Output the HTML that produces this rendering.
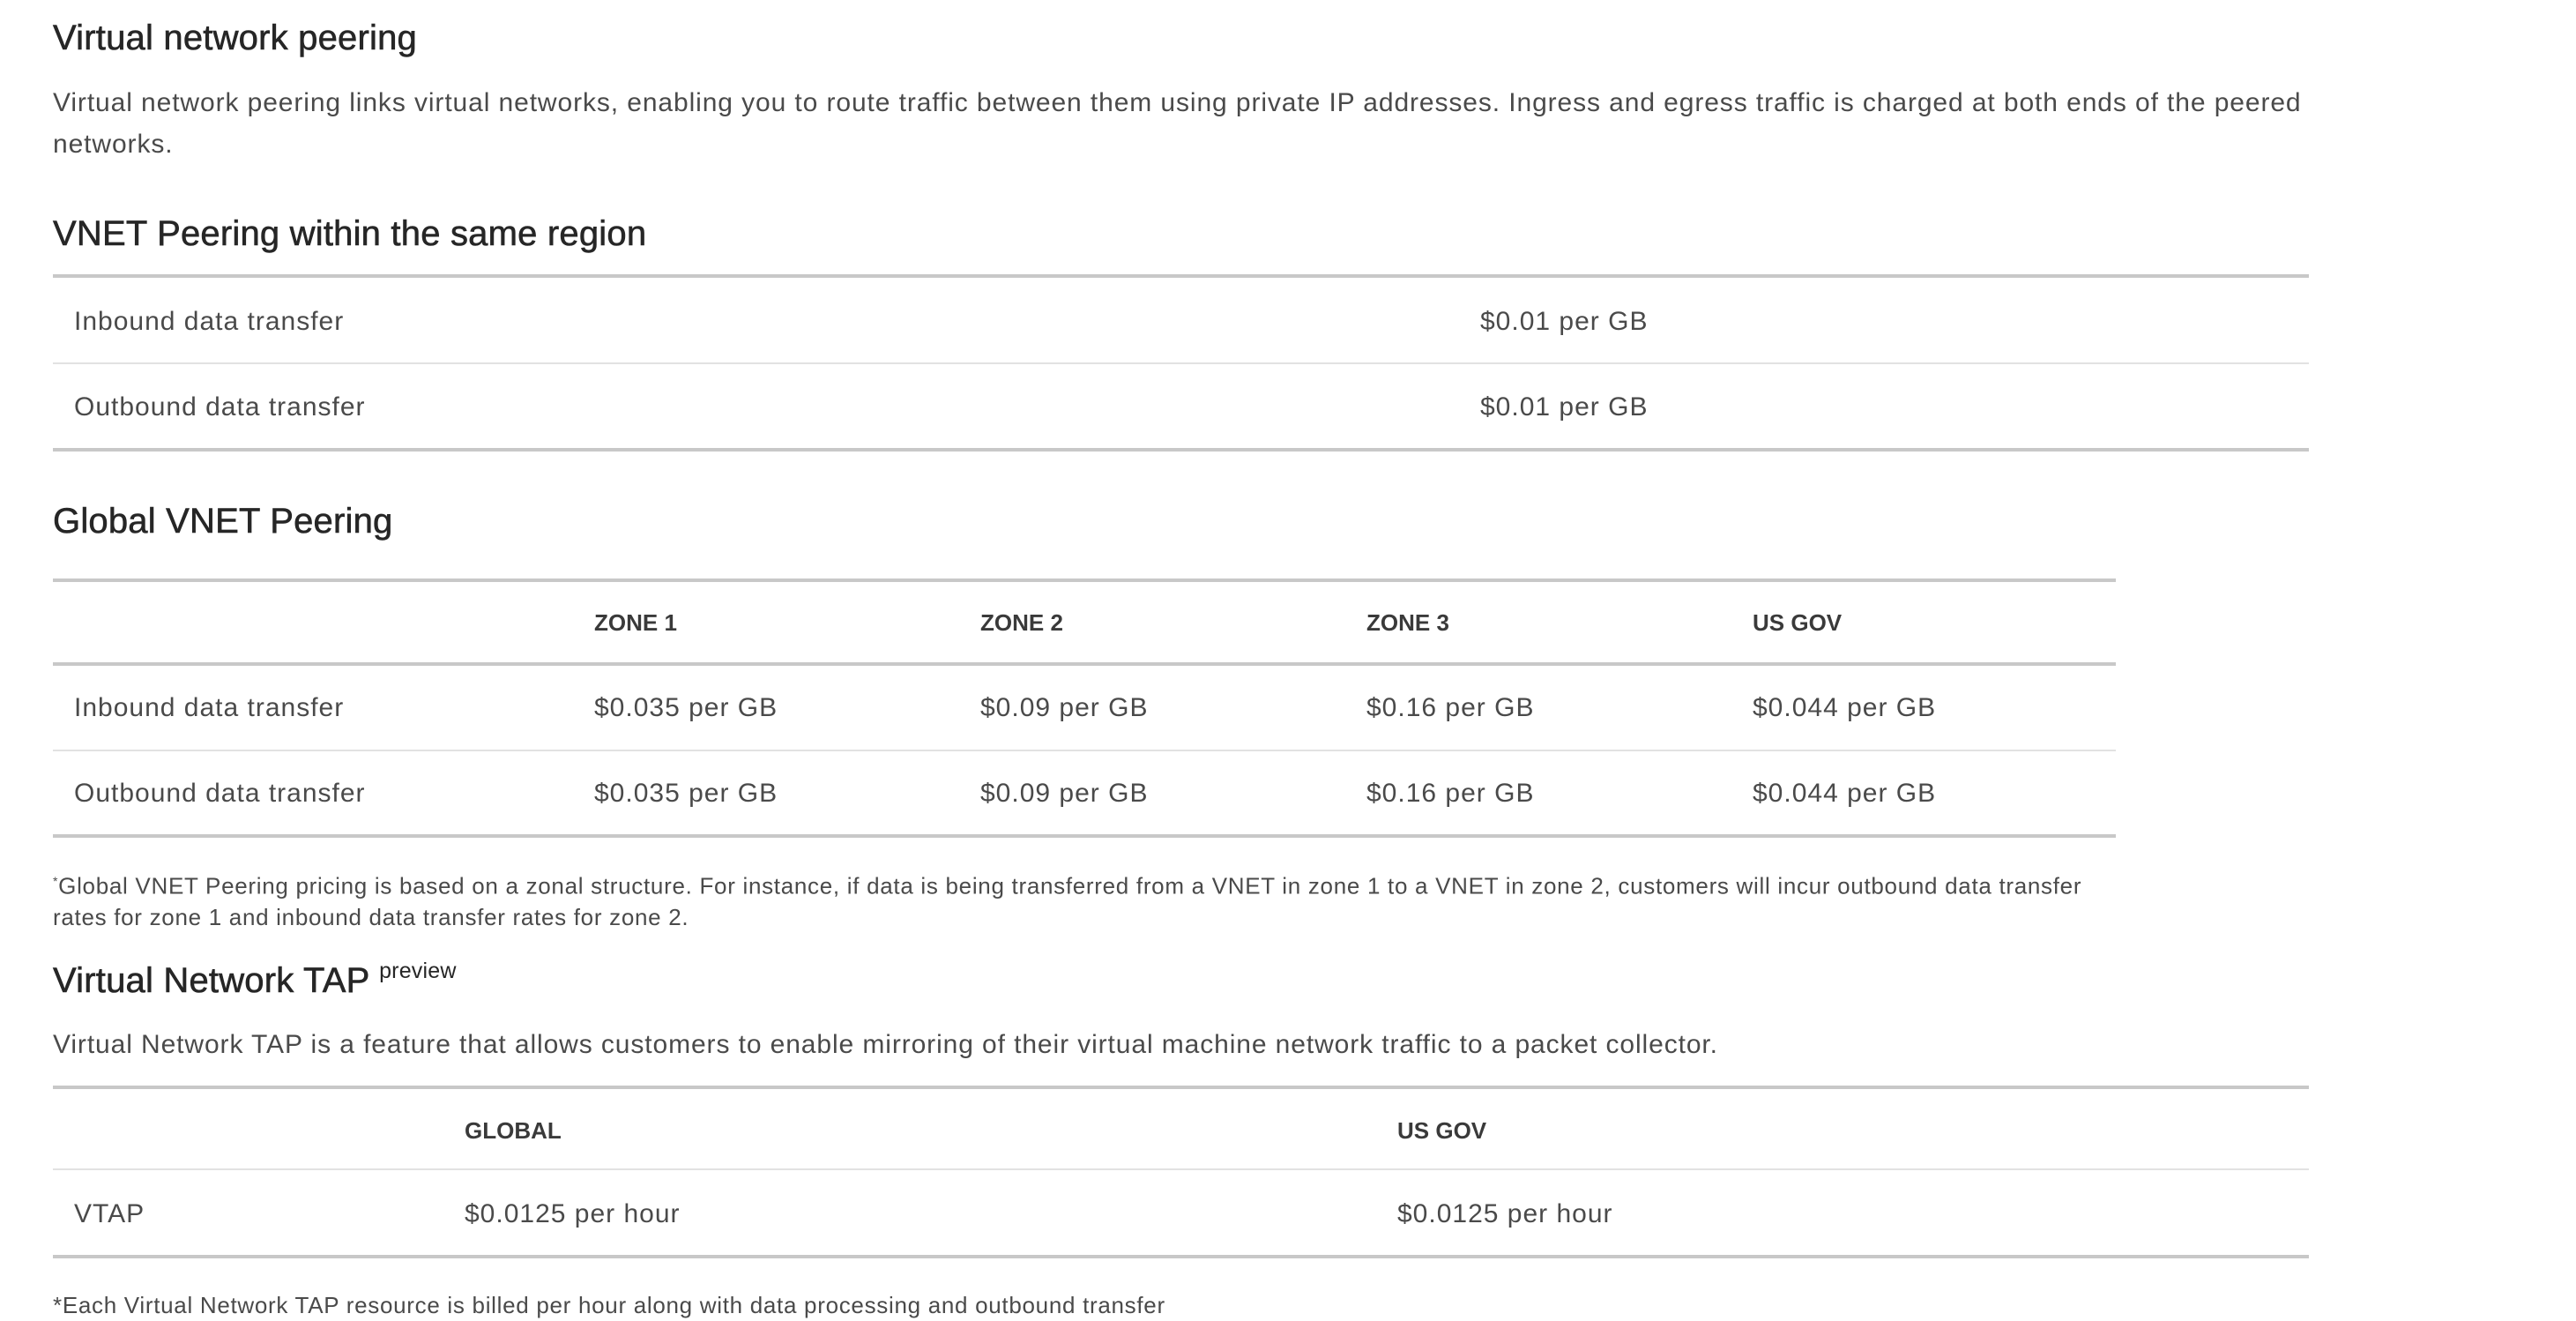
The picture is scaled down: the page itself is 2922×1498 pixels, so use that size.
<!DOCTYPE html>
<html><head><meta charset="utf-8"><style>
*{margin:0;padding:0;box-sizing:border-box}
body{width:2922px;height:1464px;background:#fff;position:relative;overflow:hidden;font-family:"Liberation Sans",sans-serif;color:#4a4a4a}
.a{position:absolute;white-space:nowrap}
.h{color:#262626;font-size:40px;line-height:50px;letter-spacing:0.2px;-webkit-text-stroke:0.6px #262626}
.p{font-size:30px;line-height:40px;letter-spacing:0.9px}
.t{font-size:30px;line-height:40px;letter-spacing:1px}
.th{font-size:26px;line-height:36px;font-weight:bold;color:#3a3a3a;letter-spacing:0px}
.f{font-size:26px;line-height:36px;letter-spacing:0.7px}
.L{position:absolute;left:60px}
.k{height:4px;background:#c8c8c8}
.n{height:2px;background:#e2e2e2}
</style></head><body>
<div class="a h" style="left:60px;top:18px">Virtual network peering</div>
<div class="a p" style="left:60px;top:97px">Virtual network peering links virtual networks, enabling you to route traffic between them using private IP addresses. Ingress and egress traffic is charged at both ends of the peered</div>
<div class="a p" style="left:60px;top:144px">networks.</div>

<div class="a h" style="left:60px;top:240px">VNET Peering within the same region</div>
<div class="L k" style="top:311px;width:2559px"></div>
<div class="a t" style="left:84px;top:345px">Inbound data transfer</div>
<div class="a t" style="left:1679px;top:345px">$0.01 per GB</div>
<div class="L n" style="top:411px;width:2559px"></div>
<div class="a t" style="left:84px;top:442px">Outbound data transfer</div>
<div class="a t" style="left:1679px;top:442px">$0.01 per GB</div>
<div class="L k" style="top:508px;width:2559px"></div>

<div class="a h" style="left:60px;top:566px">Global VNET Peering</div>
<div class="L k" style="top:656px;width:2340px"></div>
<div class="a th" style="left:674px;top:688px">ZONE 1</div>
<div class="a th" style="left:1112px;top:688px">ZONE 2</div>
<div class="a th" style="left:1550px;top:688px">ZONE 3</div>
<div class="a th" style="left:1988px;top:688px">US GOV</div>
<div class="L k" style="top:751px;width:2340px"></div>
<div class="a t" style="left:84px;top:783px">Inbound data transfer</div>
<div class="a t" style="left:674px;top:783px">$0.035 per GB</div>
<div class="a t" style="left:1112px;top:783px">$0.09 per GB</div>
<div class="a t" style="left:1550px;top:783px">$0.16 per GB</div>
<div class="a t" style="left:1988px;top:783px">$0.044 per GB</div>
<div class="L n" style="top:850px;width:2340px"></div>
<div class="a t" style="left:84px;top:880px">Outbound data transfer</div>
<div class="a t" style="left:674px;top:880px">$0.035 per GB</div>
<div class="a t" style="left:1112px;top:880px">$0.09 per GB</div>
<div class="a t" style="left:1550px;top:880px">$0.16 per GB</div>
<div class="a t" style="left:1988px;top:880px">$0.044 per GB</div>
<div class="L k" style="top:946px;width:2340px"></div>

<div class="a f" style="left:60px;top:981px"><sup style="font-size:14px">*</sup>Global VNET Peering pricing is based on a zonal structure. For instance, if data is being transferred from a VNET in zone 1 to a VNET in zone 2, customers will incur outbound data transfer</div>
<div class="a f" style="left:60px;top:1022px">rates for zone 1 and inbound data transfer rates for zone 2.</div>

<div class="a h" style="left:60px;top:1087px">Virtual Network TAP <span style="font-size:25px;position:relative;top:-16px;-webkit-text-stroke:0">preview</span></div>
<div class="a p" style="left:60px;top:1165px">Virtual Network TAP is a feature that allows customers to enable mirroring of their virtual machine network traffic to a packet collector.</div>
<div class="L k" style="top:1231px;width:2559px"></div>
<div class="a th" style="left:527px;top:1264px">GLOBAL</div>
<div class="a th" style="left:1585px;top:1264px">US GOV</div>
<div class="L n" style="top:1325px;width:2559px"></div>
<div class="a t" style="left:84px;top:1357px">VTAP</div>
<div class="a t" style="left:527px;top:1357px">$0.0125 per hour</div>
<div class="a t" style="left:1585px;top:1357px">$0.0125 per hour</div>
<div class="L k" style="top:1423px;width:2559px"></div>
<div class="a f" style="left:60px;top:1462px">*Each Virtual Network TAP resource is billed per hour along with data processing and outbound transfer</div>
</body></html>
